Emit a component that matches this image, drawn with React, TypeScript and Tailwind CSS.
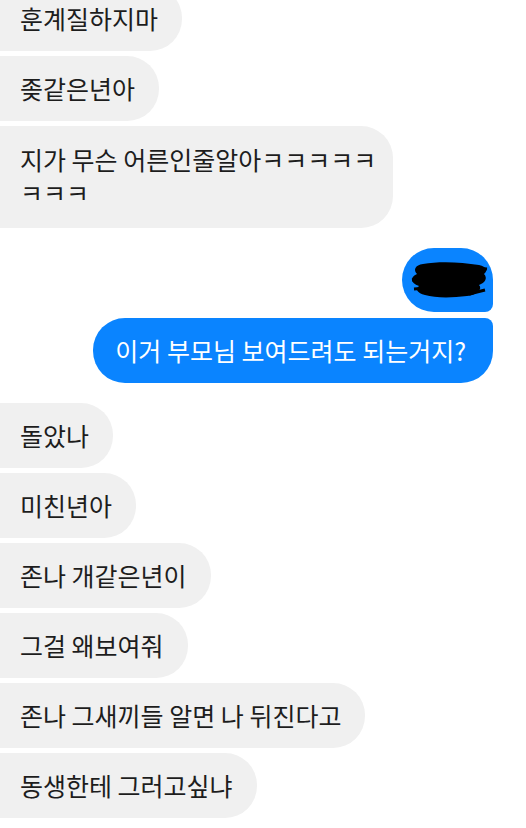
const font = { fontFamily: '"Noto Sans CJK KR", "Noto Sans", sans-serif' };

const incoming = [
  "돌았나",
  "미친년아",
  "존나 개같은년이",
  "그걸 왜보여줘",
  "존나 그새끼들 알면 나 뒤진다고",
  "동생한테 그러고싶냐",
];

function Gray({ children, className = "pr-6" }: { children: React.ReactNode; className?: string }) {
  return (
    <div
      className={`self-start bg-[#f0f0f0] text-[#1d1d1d] text-[25px] leading-[33px] rounded-r-[32px] pl-5 py-4 ${className}`}
    >
      {children}
    </div>
  );
}

export default function App() {
  return (
    <div className="w-[526px] h-[828px] bg-white overflow-hidden" style={font}>
      <div className="flex flex-col gap-[5px] -mt-[14px]">
        <Gray>훈계질하지마</Gray>
        <Gray>좆같은년아</Gray>
        <Gray className="pt-[17px] pb-[19px] pr-[17px]">
          지가 무슨 어른인줄알아ㅋㅋㅋㅋㅋ
          <br />
          ㅋㅋㅋ
        </Gray>

        <div className="mt-[15px] flex flex-col items-end gap-[6px] pr-[33px]">
          <div className="w-[91px] h-[64px] bg-[#0a84ff] rounded-[32px] rounded-br-[8px] flex items-center justify-center">
            <svg width="82" height="42" viewBox="0 0 82 42">
              <path
                d="M16 5 C32 2 54 3 72 6 C80 8 81 12 77 15 C81 19 78 24 72 26 C76 30 70 36 60 37 C44 39 28 39 18 36 C10 34 8 30 12 27 C3 24 3 18 10 15 C6 11 8 6 16 5 Z"
                fill="#000"
              />
              <path d="M5 21 L18 19 M7 30 L20 29 M62 35 L78 31 M58 8 L80 10" stroke="#000" strokeWidth="3" />
            </svg>
          </div>
          <div className="bg-[#0a84ff] text-white text-[25px] leading-[33px] rounded-[32px] rounded-tr-[8px] pl-[22px] pr-[27px] py-4">
            이거 부모님 보여드려도 되는거지?
          </div>
        </div>

        <div className="mt-[15px] flex flex-col gap-[5px]">
          {incoming.map((t) => (
            <Gray key={t}>{t}</Gray>
          ))}
        </div>
      </div>
    </div>
  );
}
